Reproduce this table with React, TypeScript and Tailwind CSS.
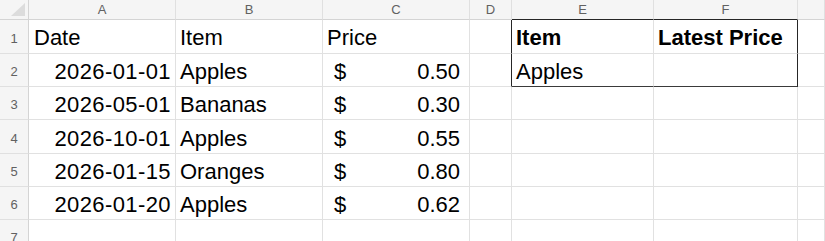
import React from 'react'

type Row = {
  date: string
  item: string
  price?: string
  lookupItem?: string
}

const rows: Row[] = [
  { date: '2026-01-01', item: 'Apples', price: '0.50', lookupItem: 'Apples' },
  { date: '2026-05-01', item: 'Bananas', price: '0.30' },
  { date: '2026-10-01', item: 'Apples', price: '0.55' },
  { date: '2026-01-15', item: 'Oranges', price: '0.80' },
  { date: '2026-01-20', item: 'Apples', price: '0.62' },
]

const columns = ['A', 'B', 'C', 'D', 'E', 'F', '']

const grid = 'border-r border-b border-[#e1e1e1]'

const ColHeader = ({ label, dark }: { label: string; dark?: boolean }) => (
  <div
    className={`flex items-center justify-center bg-[#f5f5f5] border-r border-r-[#e0e0e0] border-b ${
      dark ? 'border-b-[#262626]' : 'border-b-[#d4d4d4]'
    } pt-[1px] text-[13px] leading-[18px] text-[#616161]`}
  >
    {label}
  </div>
)

const RowHeader = ({ n }: { n: number }) => (
  <div className="flex items-end justify-center bg-[#f5f5f5] border-r border-r-[#d4d4d4] border-b border-b-[#e0e0e0] pb-[6px] text-[13px] leading-[16px] text-[#616161]">
    {n}
  </div>
)

const Cell = ({
  children,
  className = '',
  first,
}: {
  children?: React.ReactNode
  className?: string
  first?: boolean
}) => (
  <div
    className={`flex items-end overflow-hidden whitespace-nowrap bg-white text-[22px] leading-[26px] text-black ${
      first ? 'pb-[2px]' : 'pb-[1px]'
    } ${className}`}
  >
    {children}
  </div>
)

export default function App() {
  return (
    <div className="h-[241px] w-[825px] overflow-hidden bg-white font-['Liberation_Sans',Arial,sans-serif]">
      <div className="grid grid-cols-[29px_147px_147px_147px_42px_142px_144px_1fr] grid-rows-[20px_34px_33px_33px_34px_33px_33px_33px]">
        {/* corner */}
        <div className="relative bg-[#f5f5f5] border-r border-r-[#d4d4d4] border-b border-b-[#d4d4d4]">
          <svg className="absolute right-[3px] bottom-[3px]" width="14" height="13" viewBox="0 0 14 13">
            <polygon points="14,0 14,13 0,13" fill="#dcdcdc" />
          </svg>
        </div>
        {columns.map((c, i) => (
          <ColHeader key={i} label={c} dark={c === 'E' || c === 'F'} />
        ))}

        {/* row 1 */}
        <RowHeader n={1} />
        <Cell first className={`${grid} pl-[5px]`}>Date</Cell>
        <Cell first className={`${grid} pl-[4px]`}>Item</Cell>
        <Cell first className={`${grid} pl-[4px]`}>Price</Cell>
        <Cell first className={`${grid} border-r-[#262626]`} />
        <Cell first className={`${grid} pl-[4px] font-bold`}>Item</Cell>
        <Cell first className={`${grid} border-r-[#262626] pl-[4px] font-bold`}>Latest Price</Cell>
        <Cell first className={grid} />

        {rows.map((r, i) => (
          <React.Fragment key={i}>
            <RowHeader n={i + 2} />
            <Cell className={`${grid} justify-end pr-[4px] tracking-[0.4px]`}>{r.date}</Cell>
            <Cell className={`${grid} pl-[4px]`}>{r.item}</Cell>
            <Cell className={`${grid} justify-between pl-[11px] pr-[9px]`}>
              <span>$</span>
              <span>{r.price}</span>
            </Cell>
            <Cell className={`${grid} ${i === 0 ? 'border-r-[#262626]' : ''}`} />
            <Cell className={`${grid} pl-[4px] ${i === 0 ? 'border-b-[#3a3a3a]' : ''}`}>
              {r.lookupItem}
            </Cell>
            <Cell className={`${grid} ${i === 0 ? 'border-r-[#262626] border-b-[#3a3a3a]' : ''}`} />
            <Cell className={grid} />
          </React.Fragment>
        ))}

        {/* row 7 */}
        <RowHeader n={7} />
        {columns.map((c, i) => (
          <Cell key={i} className={grid} />
        ))}
      </div>
    </div>
  )
}
